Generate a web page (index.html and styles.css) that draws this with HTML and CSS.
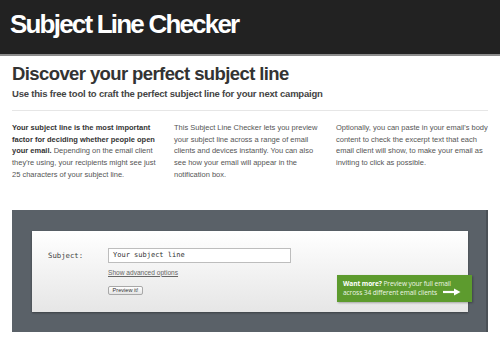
FILE: index.html
```html
<!DOCTYPE html>
<html>
<head>
<meta charset="utf-8">
<link rel="stylesheet" href="styles.css">
</head>
<body>
<header class="top">
  <div class="brand">Subject Line Checker</div>
</header>
<main class="main">
  <section class="intro">
    <h1 class="intro-title">Discover your perfect subject line</h1>
    <p class="intro-sub">Use this free tool to craft the perfect subject line for your next campaign</p>
  </section>
  <section class="cols">
    <p class="col"><strong>Your subject line is the most important<br>factor for deciding whether people open<br>your email.</strong> Depending on the email client<br>they're using, your recipients might see just<br>25 characters of your subject line.</p>
    <p class="col">This Subject Line Checker lets you preview<br>your subject line across a range of email<br>clients and devices instantly. You can also<br>see how your email will appear in the<br>notification box.</p>
    <p class="col">Optionally, you can paste in your email's body<br>content to check the excerpt text that each<br>email client will show, to make your email as<br>inviting to click as possible.</p>
  </section>
  <section class="panel">
    <div class="card">
      <div class="row">
        <label class="label">Subject:</label>
        <div class="field">
          <div class="input">Your subject line</div>
          <a class="adv">Show advanced options</a>
          <span class="btn">Preview it!</span>
        </div>
      </div>
      <div class="promo">
        <div><b>Want more?</b> Preview your full email</div>
        <div class="promo-line2">across 34 different email clients
          <svg class="arrow" width="18" height="8" viewBox="0 0 18 8"><path d="M0 4H12" stroke="#fff" stroke-width="2.2"/><path d="M11 0.5L17.5 4L11 7.5Z" fill="#fff"/></svg>
        </div>
      </div>
    </div>
  </section>
</main>
</body>
</html>
```
FILE: styles.css
```css
* { box-sizing: border-box; }
body {
  margin: 0;
  background: #fff;
  font-family: "Liberation Sans", Arial, sans-serif;
  color: #444;
}
.top {
  height: 56px;
  background: #222;
  border-bottom: 2px solid #8c8c8c;
  padding: 9px 0 0 10px;
}
.brand {
  color: #fff;
  font-weight: bold;
  font-size: 26px;
  line-height: 30px;
  letter-spacing: -1.8px;
}
.main {
  padding: 0 12px;
}
.intro {
  padding-top: 7px;
  padding-bottom: 10px;
  border-bottom: 1px solid #e6e6e6;
}
.intro-title {
  margin: 0;
  font-size: 18.5px;
  line-height: 22px;
  color: #333;
  letter-spacing: -0.6px;
}
.intro-sub {
  margin: 3px 0 0;
  font-size: 9.5px;
  line-height: 12px;
  font-weight: bold;
  letter-spacing: -0.2px;
  color: #444;
}
.cols {
  display: grid;
  grid-template-columns: 152px 152px 152px;
  column-gap: 10px;
  padding-top: 11px;
}
.col {
  margin: 0;
  font-size: 7.5px;
  line-height: 11.7px;
  color: #555;
  white-space: nowrap;
}
.col strong { color: #333; }
.panel {
  margin-top: 29px;
  height: 122px;
  background: #5a6168;
  border-right: 2px solid #4b5157;
  padding: 21px 18px 0 20px;
}
.card {
  position: relative;
  height: 81px;
  background: linear-gradient(#ffffff, #e6e6e6);
  box-shadow: 0 1px 2px rgba(0,0,0,0.35);
  padding: 17px 0 0 16px;
}
.row {
  display: flex;
}
.label {
  width: 60px;
  font-family: "DejaVu Sans Mono", "Liberation Mono", monospace;
  font-size: 7.3px;
  line-height: 15px;
  color: #444;
}
.field {
  display: flex;
  flex-direction: column;
  align-items: flex-start;
}
.input {
  width: 183px;
  height: 15px;
  border: 1px solid #bdbdbd;
  background: #fff;
  font-family: "DejaVu Sans Mono", "Liberation Mono", monospace;
  font-size: 7px;
  line-height: 13px;
  padding-left: 4px;
  color: #333;
}
.adv {
  margin-top: 5px;
  font-size: 6.6px;
  line-height: 9px;
  color: #666;
  text-decoration: underline;
}
.btn {
  margin-top: 9px;
  width: 35px;
  height: 9px;
  border: 1px solid #a8a8a8;
  border-radius: 2px;
  background: linear-gradient(#fff, #e4e4e4);
  font-size: 5.6px;
  line-height: 7px;
  text-align: center;
  color: #333;
}
.promo {
  position: absolute;
  left: 305px;
  top: 44px;
  width: 135px;
  height: 27px;
  background: #5d9b2e;
  box-shadow: 1px 1px 2px rgba(0,0,0,0.3);
  color: #eef6e6;
  font-family: "Open Sans", "Liberation Sans", sans-serif;
  font-size: 6.6px;
  line-height: 9px;
  padding: 4px 0 0 6px;
  letter-spacing: -0.1px;
}
.promo b { color: #fff; }
.promo-line2 {
  display: flex;
  align-items: center;
}
.arrow {
  margin-left: 6px;
}
```
